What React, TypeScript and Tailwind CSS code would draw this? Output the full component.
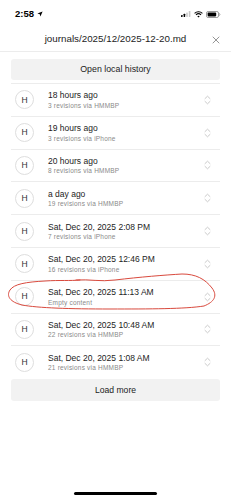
import React from "react";

type Revision = {
	when: string;
	detail: string;
};

const revisions: Revision[] = [
	{ when: "18 hours ago", detail: "3 revisions via HMMBP" },
	{ when: "19 hours ago", detail: "3 revisions via iPhone" },
	{ when: "20 hours ago", detail: "8 revisions via HMMBP" },
	{ when: "a day ago", detail: "19 revisions via HMMBP" },
	{ when: "Sat, Dec 20, 2025 2:08 PM", detail: "7 revisions via iPhone" },
	{ when: "Sat, Dec 20, 2025 12:46 PM", detail: "16 revisions via iPhone" },
	{ when: "Sat, Dec 20, 2025 11:13 AM", detail: "Empty content" },
	{ when: "Sat, Dec 20, 2025 10:48 AM", detail: "22 revisions via HMMBP" },
	{ when: "Sat, Dec 20, 2025 1:08 AM", detail: "21 revisions via HMMBP" },
];

function StatusBar() {
	return (
		<div className="h-[28px] flex items-center justify-between pl-[15px] pr-[10px]">
			<div className="flex items-center gap-[3px] text-[9.5px] font-semibold text-black">
				<span>2:58</span>
				<svg width="6" height="6" viewBox="0 0 6 6">
					<path d="M5.6 0.4 L0.4 2.6 L2.8 3.2 L3.4 5.6 Z" fill="#000" />
				</svg>
			</div>
			<div className="flex items-center gap-[3px]">
				<svg width="10" height="6" viewBox="0 0 10 6">
					<rect x="0" y="4" width="1.6" height="2" rx="0.4" fill="#000" />
					<rect x="2.6" y="2.8" width="1.6" height="3.2" rx="0.4" fill="#000" />
					<rect x="5.2" y="1.5" width="1.6" height="4.5" rx="0.4" fill="#c8c8c8" />
					<rect x="7.8" y="0" width="1.6" height="6" rx="0.4" fill="#c8c8c8" />
				</svg>
				<svg width="9" height="7" viewBox="0 0 9 7">
					<path d="M0.6 2.4 A5.6 5.6 0 0 1 8.4 2.4" stroke="#000" strokeWidth="1.1" fill="none" />
					<path d="M2 3.8 A3.6 3.6 0 0 1 7 3.8" stroke="#000" strokeWidth="1.1" fill="none" />
					<path d="M3.3 5.3 L4.5 6.6 L5.7 5.3 A1.7 1.7 0 0 0 3.3 5.3 Z" fill="#000" />
				</svg>
				<svg width="15" height="7" viewBox="0 0 15 7">
					<rect x="0.5" y="0.5" width="12" height="6" rx="1.6" stroke="#9a9a9a" fill="none" />
					<rect x="1.6" y="1.6" width="8.6" height="3.8" rx="0.8" fill="#000" />
					<path d="M13.4 2.4 Q14.4 3.5 13.4 4.6" stroke="#9a9a9a" fill="none" />
				</svg>
			</div>
		</div>
	);
}

function ChevronsUpDown() {
	return (
		<svg width="7" height="10" viewBox="0 0 7 10" fill="none">
			<path d="M1 3.6 L3.5 1.2 L6 3.6" stroke="#c4c4c4" strokeWidth="0.9" strokeLinecap="round" strokeLinejoin="round" />
			<path d="M1 6.4 L3.5 8.8 L6 6.4" stroke="#c4c4c4" strokeWidth="0.9" strokeLinecap="round" strokeLinejoin="round" />
		</svg>
	);
}

function RevisionRow({ revision }: { revision: Revision }) {
	return (
		<li className="h-[32.8px] border-t border-[#ececec] flex items-center pl-[4px] pr-[9px]">
			<div className="w-[19px] h-[19px] shrink-0 rounded-full border border-[#dedede] flex items-center justify-center text-[8.5px] text-[#333]">
				H
			</div>
			<div className="ml-[14px] flex-1 flex flex-col leading-none pt-[1px]">
				<span className="text-[8.5px] text-[#1c1c1c]">{revision.when}</span>
				<span className="mt-[3px] text-[6.5px] tracking-[0.2px] text-[#8a8a8a]">{revision.detail}</span>
			</div>
			<ChevronsUpDown />
		</li>
	);
}

export default function App() {
	return (
		<div className="relative w-[231px] h-[500px] bg-white overflow-hidden font-['Liberation_Sans',Arial,sans-serif]">
			<StatusBar />
			<header className="relative h-[24px] flex items-center justify-center border-b border-[#ececec]">
				<h1 className="text-[9.8px] text-[#1c1c1c]">journals/2025/12/2025-12-20.md</h1>
				<button type="button" className="absolute right-[11px] top-[8px]">
					<svg width="8" height="8" viewBox="0 0 8 8">
						<path d="M1 1 L7 7 M7 1 L1 7" stroke="#8a8a8a" strokeWidth="0.9" strokeLinecap="round" />
					</svg>
				</button>
			</header>
			<main className="px-[11px] pt-[7px]">
				<button
					type="button"
					className="w-full h-[21px] rounded-[3px] bg-[#f2f2f2] text-[8.8px] text-[#1c1c1c] flex items-center justify-center"
				>
					Open local history
				</button>
				<ul className="mt-[3px] flex flex-col">
					{revisions.map((revision) => (
						<RevisionRow key={revision.when} revision={revision} />
					))}
				</ul>
				<button
					type="button"
					className="mt-[1px] w-full h-[22px] rounded-[3px] bg-[#f2f2f2] text-[8.6px] text-[#1c1c1c] flex items-center justify-center"
				>
					Load more
				</button>
			</main>
			{/* hand-drawn annotation */}
			<svg className="absolute inset-0 pointer-events-none" width="231" height="500" viewBox="0 0 231 500" fill="none">
				<path
					d="M76 280 C90 279 100 282 115 280 C140 277 165 275 182 274 C196 274 205 279 212 288 C218 296 214 302 204 306 C185 309 150 309 110 309 C70 309 38 308 22 305 C10 302 6 296 10 290 C14 284 26 282 45 281 C60 280 70 281 80 280"
					stroke="#d94a3e"
					strokeWidth="1"
					strokeLinecap="round"
				/>
			</svg>
			<div className="absolute left-[74px] bottom-[5px] w-[83px] h-[3px] rounded-full bg-black" />
		</div>
	);
}
